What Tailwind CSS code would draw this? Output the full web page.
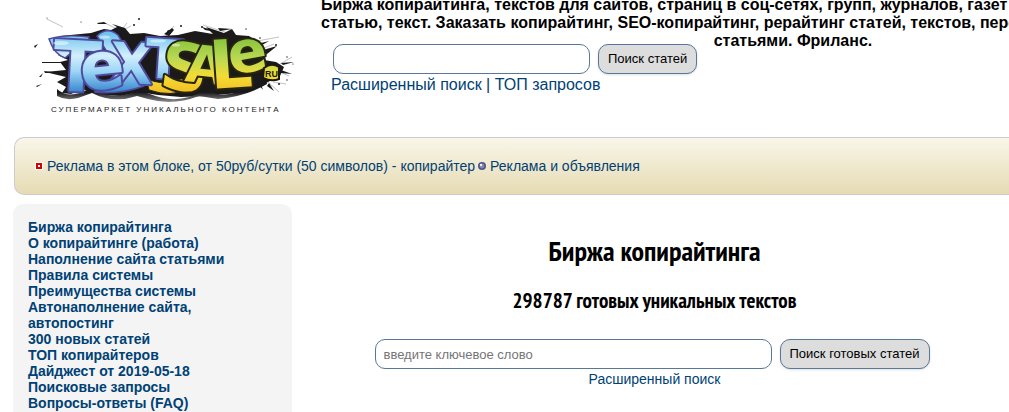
<!DOCTYPE html>
<html lang="ru">
<head>
<meta charset="utf-8">
<meta name="viewport" content="width=device-width, initial-scale=1">
<title>Биржа копирайтинга</title>
<script src="https://cdn.jsdelivr.net/npm/@tailwindcss/browser@4"></script>
</head>
<body class="h-screen overflow-hidden bg-white font-['Liberation_Sans',Arial,sans-serif] text-sm text-black">
<header class="flex h-[137px] items-start overflow-hidden">
  <a href="#" aria-label="TextSale.ru" class="ml-7 mt-2 block w-[273px] shrink-0">
    <svg viewBox="28 8 273 112" class="block w-full" role="img" aria-label="TextSale.ru — супермаркет уникального контента">
      <defs>
        <linearGradient id="blue" gradientUnits="userSpaceOnUse" x1="0" y1="34" x2="0" y2="96"><stop offset="0" stop-color="#6fc3ee"/><stop offset=".35" stop-color="#d3effc"/><stop offset=".6" stop-color="#9dd6f6"/><stop offset="1" stop-color="#2478c8"/></linearGradient>
        <linearGradient id="lime" gradientUnits="userSpaceOnUse" x1="0" y1="34" x2="0" y2="94"><stop offset="0" stop-color="#7dbf35"/><stop offset=".4" stop-color="#b9d853"/><stop offset=".7" stop-color="#f3dc35"/><stop offset="1" stop-color="#f4bc20"/></linearGradient>
        <linearGradient id="shade" x1="0" y1="0" x2="0" y2="1"><stop offset=".6" stop-color="#19181c"/><stop offset="1" stop-color="#8b8b8b"/></linearGradient>
      </defs>
      <!-- ink splash -->
      <g fill="#1c191b">
        <path d="M60 36 91 33 104 29 111 30 117 27 112 24 125 28 130 34 144 33 160 36 178 35 195 31 213 34 206 27 224 33 232 29 236 35 249 36 260 43 258 50 267 53 264 60 276 62 284 67 280 76 264 84 250 90 238 93 207 96 181 97 158 95 139 92 121 96 101 95 82 89 71 94 62 93 66 87 57 82 66 77 45 72 66 70 60 62 68 60 58 55Z"/>
        <path d="M97 23 104 22 107 24 98 24ZM34 46 38 44 35 48ZM42 62H61V63H42ZM44 71 60 73 45 73ZM39 77 43 73 41 77ZM36 86 42 84 37 87ZM202 27 222 33 205 30ZM218 28 232 29 220 31ZM164 34 172 28 174 30 169 36ZM253 45 269 41 257 48ZM263 50 277 46 267 54ZM281 63 294 62 283 65ZM281 70 292 74 281 73ZM269 83 274 91 267 86ZM261 84 263 90 259 85Z"/>
        <circle cx="139" cy="19" r="1"/><circle cx="134" cy="25" r="1"/><circle cx="169" cy="32" r="2"/><circle cx="81" cy="22" r=".6"/><circle cx="47" cy="18" r=".5"/><circle cx="181" cy="26" r="1"/><circle cx="202" cy="27" r="1"/><circle cx="276" cy="45" r="1"/><circle cx="287" cy="57" r=".7"/><circle cx="279" cy="84" r="1"/><circle cx="246" cy="29" r=".7"/><circle cx="260" cy="38" r=".8"/><circle cx="293" cy="64" r=".6"/><circle cx="287" cy="80" r=".7"/>
      </g>
      <g fill="none" stroke="#302d31" stroke-width=".3"><path d="M47 19 63 27M103 22 121 31M203 25 231 34M252 42 279 37M264 48 274 44M280 64 292 57M282 73 289 76M268 82 279 92M273 82 286 84M166 36 174 26M123 28 127 23M125 29 131 26"/></g>
      <!-- grey-edged base under the lettering -->
      <path d="M57 89Q70 101 92 87Q111 103 139 90L150 94Q178 106 205 90L220 95Q244 94 266 78L267 84Q247 96 218 99L199 96Q173 106 148 99L137 96Q113 104 92 93L78 98Q66 101 57 96Z" fill="url(#shade)"/>
      <path d="M146 78Q160 86 176 80Q188 76 190 88Q172 98 149 90Z" fill="url(#lime)" stroke="#232015"/>
      <!-- wing and curl of the blue lettering -->
      <path d="M49 39Q64 34 89 37L87 50Q73 50 65 58Q54 54 49 39Z" fill="url(#blue)" stroke="#4f4b9f" stroke-width="1.5"/>
      <path d="M97 36Q107 26 118 35L142 75Q147 80 144 86Q119 95 94 92Q126 89 121 74Z" fill="url(#blue)" stroke="#4f4b9f" stroke-width="1.5"/>
      <g font-family="DejaVu Sans, sans-serif" font-weight="bold" stroke-linejoin="round" paint-order="stroke" stroke-width="4">
        <g fill="url(#blue)" stroke="#4f4b9f">
          <text x="52" y="90" font-size="70" rotate="3">T</text>
          <text x="109" y="82" font-size="56" rotate="3">X</text>
          <text x="82" y="91" font-size="66" rotate="-6">e</text>
          <text x="144" y="77" font-size="54" rotate="4">T</text>
        </g>
        <g fill="url(#lime)" stroke="#26260f">
          <text x="158" y="87" font-size="66" rotate="8">S</text>
          <text x="184" y="81" font-size="52" rotate="6">A</text>
          <text x="211" y="89" font-size="67" rotate="-4">L</text>
          <text x="231" y="75" font-size="58" rotate="-10">e</text>
        </g>
      </g>
      <!-- glossy highlights -->
      <g fill="#fff" opacity=".5"><ellipse cx="61" cy="43" rx="8" ry="2"/><ellipse cx="105" cy="37" rx="5" ry="1.6"/><ellipse cx="158" cy="41" rx="8" ry="1.6"/><ellipse cx="176" cy="45" rx="4" ry="1.6"/></g>
      <path d="M264 68Q271 62 279 67V79Q272 82 263 78Z" fill="url(#lime)" stroke="#1d190e" stroke-width="2"/>
      <text x="265" y="77" font-family="Liberation Sans" font-size="9" font-weight="bold" fill="#201c10">RU</text>
      <text x="51" y="112" font-family="Liberation Sans" font-size="8" letter-spacing="2" fill="#202020">СУПЕРМАРКЕТ УНИКАЛЬНОГО КОНТЕНТА</text>
    </svg>
  </a>
  <div class="ml-5 min-w-0 flex-1">
    <h2 class="-mt-1 w-[944px] whitespace-nowrap text-base/[18px] font-bold">Биржа копирайтинга, текстов для сайтов, страниц в соц-сетях, групп, журналов, газет<br>статью, текст. Заказать копирайтинг, SEO-копирайтинг, рерайтинг статей, текстов, перевод<span class="block text-center">статьями. Фриланс.</span></h2>
    <form class="-mt-[6px] ml-3 flex w-fit gap-2">
      <input type="search" aria-label="Поиск статей" class="h-[30px] w-[257px] rounded-[10px] border border-[#56789a] bg-white px-2 text-[13px]">
      <button type="button" class="h-[30px] rounded-[10px] border border-[#56789a] bg-[#ddd] px-[9px] text-[13px] shadow-sm">Поиск статей</button>
    </form>
    <nav class="ml-[10px] text-base/[22px] text-[#003366]"><a href="#" class="text-[#004175]">Расширенный поиск</a> | <a href="#" class="text-[#004175]">ТОП запросов</a></nav>
  </div>
</header>
<div class="ml-[14px] flex h-[58px] items-center rounded-l-[10px] border border-r-0 border-[#ccc] bg-linear-to-b from-[#f9f6ea] to-[#e6dbb3] pl-5 text-[#004175]">
  <svg viewBox="0 0 8 8" class="mr-1 size-2" aria-hidden="true"><path fill="#fff" d="M0 0h8v8H0z"/><path fill="none" stroke="#d20000" stroke-width="2" d="M2 2h4v4H2z"/></svg>
  <a href="#">Реклама в этом блоке, от 50руб/сутки (50 символов) - копирайтер</a>
  <svg viewBox="0 0 8 8" class="ml-[3px] mr-1 size-2" aria-hidden="true"><circle cx="4" cy="4" r="4" fill="#4d568c"/><circle cx="4" cy="4" r="2.4" fill="#8289aa"/><circle cx="3" cy="3" r="1.2" fill="#eee"/></svg>
  <a href="#">Реклама и объявления</a>
</div>
<div class="mt-[9px] flex items-start gap-2">
  <aside class="ml-[13px] w-[279px] shrink-0 rounded-t-[10px] bg-[#f4f4f4] px-[15px] pb-4 pt-[15px]">
    <nav class="flex w-[200px] flex-col text-sm/4 font-bold text-[#004175]">
      <a href="#">Биржа копирайтинга</a><a href="#">О копирайтинге (работа)</a><a href="#">Наполнение сайта статьями</a><a href="#">Правила системы</a><a href="#">Преимущества системы</a><a href="#">Автонаполнение сайта, автопостинг</a><a href="#">300 новых статей</a><a href="#">ТОП копирайтеров</a><a href="#">Дайджест от 2019-05-18</a><a href="#">Поисковые запросы</a><a href="#">Вопросы-ответы (FAQ)</a>
    </nav>
  </aside>
  <main class="min-w-0 flex-1 pt-[31px] text-center">
    <h1 class="font-['PT_Sans_Narrow','Liberation_Sans_Narrow','Liberation_Sans',sans-serif] text-[28px]/8 font-bold">Биржа копирайтинга</h1>
    <h2 class="mt-[22px] font-['PT_Sans_Narrow','Liberation_Sans_Narrow','Liberation_Sans',sans-serif] text-[21px]/6 font-bold">298787 готовых уникальных текстов</h2>
    <form class="mt-[26px] flex justify-center gap-2 pr-[5px]">
      <input type="search" aria-label="Ключевое слово" placeholder="введите ключевое слово" class="h-[30px] w-[397px] rounded-[10px] border border-[#56789a] bg-white px-2 text-[13px] placeholder:text-[#757575]">
      <button type="button" class="h-[30px] rounded-[10px] border border-[#56789a] bg-[#ddd] px-[9px] text-[13px] shadow-sm">Поиск готовых статей</button>
    </form>
    <a href="#" class="text-sm/5 text-[#004175]">Расширенный поиск</a>
  </main>
</div>
</body>
</html>
